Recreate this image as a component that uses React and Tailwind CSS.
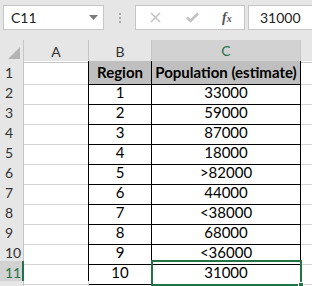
import React from 'react';

const rows = [
  ['1', '33000'],
  ['2', '59000'],
  ['3', '87000'],
  ['4', '18000'],
  ['5', '>82000'],
  ['6', '44000'],
  ['7', '<38000'],
  ['8', '68000'],
  ['9', '<36000'],
  ['10', '31000'],
];

const cols = 'grid grid-cols-[24px_65px_63px_149px_1fr]';

const App = () => {
  return (
    <div className="w-[312px] h-[286px] overflow-hidden bg-white text-[15px] font-['Lato','Liberation_Sans',sans-serif]">
      {/* barre de formule */}
      <div className="h-[40px] bg-[#e6e6e6] flex items-start pt-[5px] pl-[3px]">
        <div className="w-[101px] h-[25px] bg-white border border-[#c6c6c6] flex items-center justify-between pl-[7px] pr-[5px]">
          <span className="text-[#222] text-[14px]">C11</span>
          <svg width="9" height="5" viewBox="0 0 9 5"><path d="M0 0 L9 0 L4.5 5 Z" fill="#7a7a7a" /></svg>
        </div>
        <div className="w-[31px] h-[25px] flex flex-col items-center justify-center gap-[2px]">
          <div className="w-[2px] h-[2px] bg-[#a8a8a8]" />
          <div className="w-[2px] h-[2px] bg-[#a8a8a8]" />
          <div className="w-[2px] h-[2px] bg-[#a8a8a8]" />
        </div>
        <div className="w-[110px] h-[25px] bg-white border border-[#c6c6c6] flex items-center">
          <svg className="ml-[14px]" width="11" height="11" viewBox="0 0 11 11"><path d="M1 1 L10 10 M10 1 L1 10" stroke="#c2c2c2" strokeWidth="1.5" /></svg>
          <svg className="ml-[25px]" width="13" height="11" viewBox="0 0 13 11"><path d="M1 5.5 L4.5 9 L12 1.5" stroke="#c2c2c2" strokeWidth="2.6" fill="none" /></svg>
          <span className="ml-[23px] text-[#555] text-[14px] italic font-bold font-['Liberation_Serif',serif]">f<span className="text-[10px]">x</span></span>
        </div>
        <div className="ml-[3px] flex-1 h-[25px] bg-white border border-[#c6c6c6] border-r-0 flex items-center pl-[11px]">
          <span className="text-[#222] text-[14px]">31000</span>
        </div>
      </div>

      {/* en-têtes de colonnes */}
      <div className={cols + ' h-[21px] bg-[#e6e6e6] text-[#333] text-[14px]'}>
        <div className="border-r border-b border-[#c6c6c6] flex items-end justify-end pr-[3px] pb-[3px]">
          <svg width="12" height="12" viewBox="0 0 12 12"><path d="M12 0 L12 12 L0 12 Z" fill="#b4b4b4" /></svg>
        </div>
        <div className="border-r border-b border-[#c6c6c6] flex items-center justify-center">A</div>
        <div className="border-r border-b border-[#c6c6c6] flex items-center justify-center">B</div>
        <div className="bg-[#d2d2d2] border-r border-[#c6c6c6] border-b-2 border-b-[#217346] flex items-center justify-center text-[#217346]">C</div>
        <div className="border-b border-[#c6c6c6]" />
      </div>

      {/* lignes */}
      <div className={cols + ' h-[20px] text-[15px]'}>
        <div className="bg-[#e6e6e6] border-r border-b border-[#c6c6c6] flex items-center pl-[5px] text-[#333] text-[14px]">1</div>
        <div className="border-r border-b border-r-black border-b-[#d4d4d4]" />
        <div className="bg-[#bfbfbf] border-r border-b border-black flex items-center justify-center font-bold">Region</div>
        <div className="bg-[#bfbfbf] border-r border-b border-black flex items-center justify-center font-bold whitespace-nowrap">Population (estimate)</div>
        <div className="border-b border-[#d4d4d4]" />
      </div>
      {rows.map(function(r, i) {
        const last = i === rows.length - 1;
        return (
          <div key={i} className={cols + ' h-[20px] text-[15px]'}>
            <div className={last
              ? 'bg-[#d2d2d2] border-r-2 border-r-[#217346] border-b border-b-[#c6c6c6] flex items-center pl-[5px] text-[#217346] text-[14px]'
              : 'bg-[#e6e6e6] border-r border-b border-[#c6c6c6] flex items-center pl-[5px] text-[#333] text-[14px]'}>
              {i + 2}
            </div>
            <div className="border-r border-b border-r-black border-b-[#d4d4d4]" />
            <div className="border-r border-b border-black flex items-center justify-center">{r[0]}</div>
            <div className="relative border-r border-b border-black flex items-center justify-center">
              {r[1]}
              {last && (
                <div className="absolute left-[-1px] top-[-1px] right-[-2px] bottom-[-2px] border-2 border-[#217346]">
                  <div className="absolute right-[-4px] bottom-[-4px] w-[6px] h-[6px] bg-[#217346] border border-white" />
                </div>
              )}
            </div>
            <div className="border-b border-[#d4d4d4]" />
          </div>
        );
      })}
      <div className={cols + ' h-[20px]'}>
        <div className="bg-[#e6e6e6] border-r border-[#c6c6c6]" />
        <div className="border-r border-[#d4d4d4]" />
        <div className="border-r border-[#d4d4d4]" />
        <div className="border-r border-[#d4d4d4]" />
        <div />
      </div>
    </div>
  );
};

export default App;
